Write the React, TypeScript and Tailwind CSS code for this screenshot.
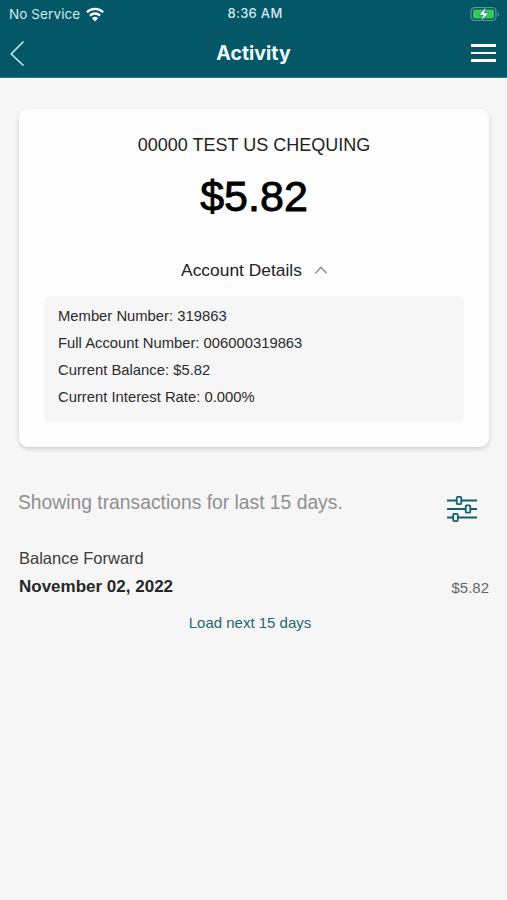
const details = [
  { label: "Member Number", value: "319863" },
  { label: "Full Account Number", value: "006000319863" },
  { label: "Current Balance", value: "$5.82" },
  { label: "Current Interest Rate", value: "0.000%" },
];

function StatusBar() {
  return (
    <div className="grid grid-cols-3 items-center h-7 pl-[9px] pr-[6px] text-[#d3eaf0]">
      <div className="flex items-center gap-[6px] font-['Inter',sans-serif] text-[13.5px] tracking-[0.1px]">
        <span className="whitespace-nowrap">No Service</span>
        <svg width="18" height="15" viewBox="0 0 18 15" fill="none" stroke="#fff" strokeWidth="2.3">
          <path d="M0.9 5.2a11.6 11.6 0 0 1 16.2 0" />
          <path d="M3.9 8.6a7.3 7.3 0 0 1 10.2 0" />
          <path d="M6 11.3a4.3 4.3 0 0 1 6 0L9 14.4Z" fill="#fff" stroke="none" />
        </svg>
      </div>
      <div className="text-center font-['Inter',sans-serif] text-[13px] font-medium tracking-[0.3px]">8:36 AM</div>
      <svg className="justify-self-end" width="31" height="18" viewBox="0 0 31 18">
        <rect x="1" y="2.5" width="25" height="13" rx="4" fill="none" stroke="#5d9a9f" strokeWidth="1.2" />
        <rect x="3" y="4.5" width="21" height="9" rx="2" fill="#35c759" />
        <path d="M27.8 7v4.4c1.8-.8 1.8-3.6 0-4.4Z" fill="#5d9a9f" />
        <path d="M16 2 9 10h4.2L11 16.2 18.6 8H14.3Z" fill="#fff" stroke="#035767" strokeWidth="0.5" />
      </svg>
    </div>
  );
}

function NavBar() {
  return (
    <div className="flex items-center justify-between h-[50px] pl-[10px] pr-[11px]">
      <button aria-label="Back">
        <svg width="26" height="26" viewBox="0 0 26 26" fill="none" stroke="#c5e8ef" strokeWidth="1.6">
          <path d="M13.5 1.5 1.2 14l12.3 11.5" />
        </svg>
      </button>
      <h1 className="font-['Inter',sans-serif] text-[19.5px] leading-6 font-bold text-[#f0fafc]">Activity</h1>
      <button aria-label="Menu" className="flex flex-col gap-[5px] w-[25px]">
        <span className="h-[2.5px] bg-white" />
        <span className="h-[2.5px] bg-white" />
        <span className="h-[2.5px] bg-white" />
      </button>
    </div>
  );
}

function FilterIcon() {
  return (
    <svg width="30" height="26" viewBox="0 0 30 26" fill="none" stroke="#14606c" strokeWidth="1.8">
      <path d="M0 4.5h9.5M14.5 4.5H30M0 13h18.5M23.500 13H30M0 21.500h6M11 21.500H30" />
      <rect x="9.700" y="0.900" width="4.600" height="7.200" rx="1" />
      <rect x="18.700" y="9.400" width="4.600" height="7.200" rx="1" />
      <rect x="6.200" y="17.900" width="4.600" height="7.200" rx="1" />
    </svg>
  );
}

export default function App() {
  return (
    <div className="w-full min-h-screen bg-[#f6f6f6] font-['Liberation_Sans',Arial,sans-serif]">
      <header className="h-[78px] bg-[#035767] border-b border-[#2f7885]">
        <StatusBar />
        <NavBar />
      </header>

      <main className="pt-[31px] pl-[19px] pr-[18px]">
        <section className="h-[338px] rounded-[9px] bg-[#fefefe] px-[25px] pt-[25px] shadow-[0_2px_4px_rgba(0,0,0,0.17)]">
          <h2 className="text-center text-[18px] leading-[22px] text-[#222]">00000 TEST US CHEQUING</h2>
          <p className="mt-[15px] text-center text-[43px] leading-[50px] text-black [-webkit-text-stroke:0.9px_#000]">$5.82</p>
          <button className="mt-[38px] flex w-full items-center justify-center gap-[13px] text-[17.4px] leading-[22px] text-[#222]">
            Account Details
            <svg width="12" height="8" viewBox="0 0 12 8" fill="none" stroke="#888" strokeWidth="1.3">
              <path d="M0.500 7.200 6 1.200l5.500 6" />
            </svg>
          </button>
          <ul className="mt-[15px] h-[126px] rounded-[6px] bg-[#f6f6f6] pl-[14px] pt-[7px] text-[14.8px] leading-[27px] text-[#2b2b2b]">
            {details.map((d) => (
              <li key={d.label}>
                {d.label}: {d.value}
              </li>
            ))}
          </ul>
        </section>

        <div className="mt-[43px] flex items-start justify-between pr-[12px]">
          <p className="-ml-px text-[19.3px] leading-[26px] text-[#8f8f8f]">Showing transactions for last 15 days.</p>
          <div className="pt-[6px]">
            <FilterIcon />
          </div>
        </div>

        <div className="mt-[25px] flex items-end justify-between">
          <div>
            <p className="text-[16.500px] leading-[22px] text-[#3c3c3c]">Balance Forward</p>
            <p className="mt-[7px] text-[17px] leading-[22px] font-bold text-[#262626]">November 02, 2022</p>
          </div>
          <span className="text-[15px] leading-[20px] text-[#666]">$5.82</span>
        </div>
        <button className="mt-[15px] block w-full pr-[8px] text-center text-[15px] leading-[20px] text-[#1f6773]">Load next 15 days</button>
      </main>
    </div>
  );
}
